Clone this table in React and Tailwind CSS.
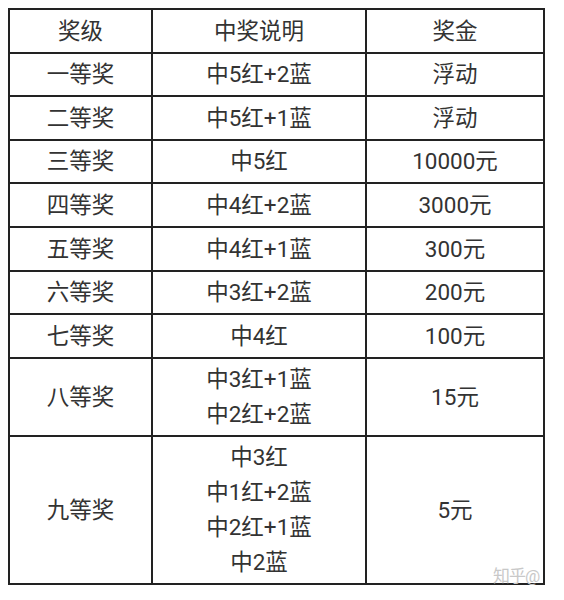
import React from "react";

const rows = [
  { h: 43, a: "一等奖", b: ["中5红+2蓝"], c: "浮动" },
  { h: 44, a: "二等奖", b: ["中5红+1蓝"], c: "浮动" },
  { h: 43, a: "三等奖", b: ["中5红"], c: "10000元" },
  { h: 44, a: "四等奖", b: ["中4红+2蓝"], c: "3000元" },
  { h: 44, a: "五等奖", b: ["中4红+1蓝"], c: "300元" },
  { h: 43, a: "六等奖", b: ["中3红+2蓝"], c: "200元" },
  { h: 44, a: "七等奖", b: ["中4红"], c: "100元" },
  { h: 78, a: "八等奖", b: ["中3红+1蓝", "中2红+2蓝"], c: "15元" },
  { h: 148, a: "九等奖", b: ["中3红", "中1红+2蓝", "中2红+1蓝", "中2蓝"], c: "5元" },
];

export default function App() {
  return (
    <div
      className="relative w-[564px] h-[600px] bg-white text-[#333] pt-[8px] pl-[8px]"
      style={{ fontFamily: '"Roboto", "Noto Sans CJK SC", sans-serif' }}
    >
      <table className="border-collapse border-2 border-[#222] text-[22.5px] leading-[35px] table-fixed w-[535px]">
        <colgroup>
          <col className="w-[143px]" />
          <col className="w-[214px]" />
          <col className="w-[178px]" />
        </colgroup>
        <thead>
          <tr className="h-[44px]">
            <th className="border-2 border-[#222] font-normal text-center">奖级</th>
            <th className="border-2 border-[#222] font-normal text-center">中奖说明</th>
            <th className="border-2 border-[#222] font-normal text-center">奖金</th>
          </tr>
        </thead>
        <tbody>
          {rows.map((r) => (
            <tr key={r.a} style={{ height: r.h }}>
              <td className="border-2 border-[#222] text-center p-0">{r.a}</td>
              <td className="border-2 border-[#222] text-center p-0">
                {r.b.map((l) => (
                  <div key={l}>{l}</div>
                ))}
              </td>
              <td className="border-2 border-[#222] text-center p-0">{r.c}</td>
            </tr>
          ))}
        </tbody>
      </table>
      <div className="absolute left-[493px] top-[566px] text-[17px] leading-[20px] text-[#c8c8c8] tracking-[-1px]">
        知乎@
      </div>
    </div>
  );
}
